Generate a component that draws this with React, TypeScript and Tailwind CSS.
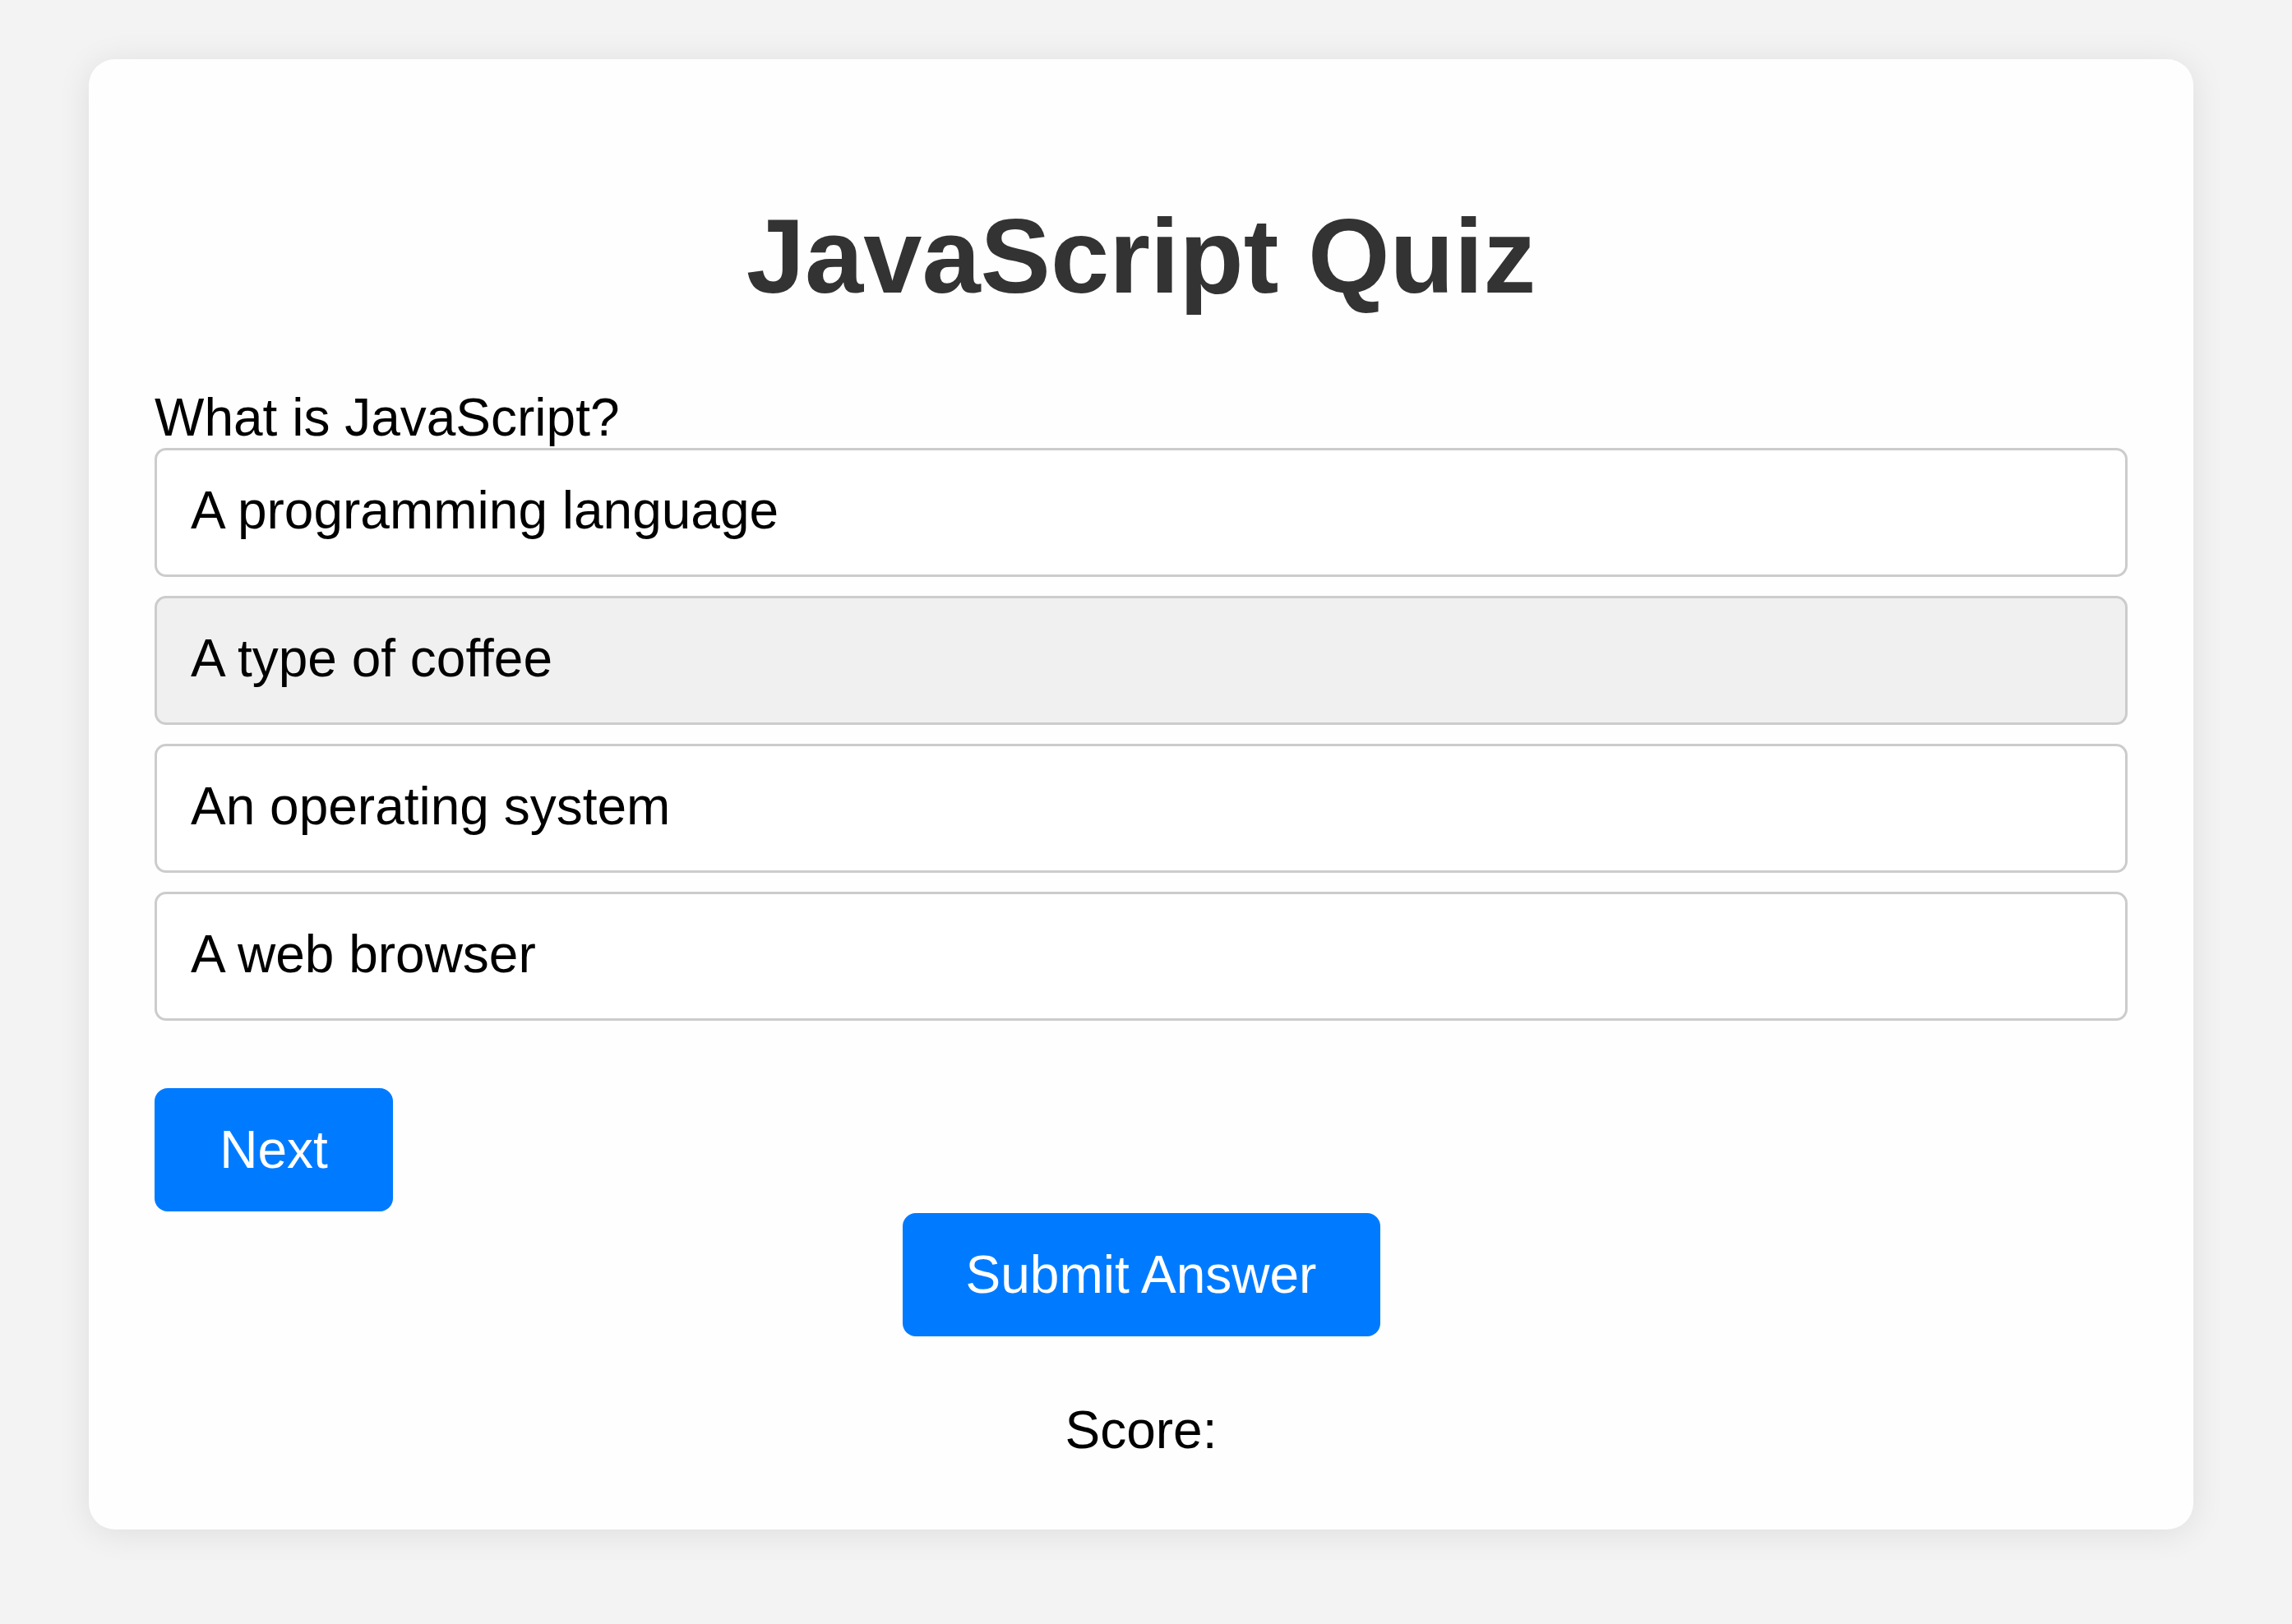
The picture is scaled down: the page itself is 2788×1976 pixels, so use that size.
import React from "react";

const options = [
  "A programming language",
  "A type of coffee",
  "An operating system",
  "A web browser",
];

export default function App() {
  return (
    <div
      className="min-h-[1976px] w-full bg-[#f3f3f3] pt-[72px] text-black"
      style={{ fontFamily: '"Liberation Sans", Arial, sans-serif' }}
    >
      <div className="ml-[108px] w-[2560px] rounded-[32px] bg-[#fefefe] px-[80px] pt-[80px] pb-[84px] shadow-[0_4px_40px_rgba(0,0,0,0.09)]">
        <h1 className="mt-[86px] mb-[86px] text-center text-[128px] font-bold leading-[147px] text-[#333333]">
          JavaScript Quiz
        </h1>
        <p className="text-[64px] leading-[74px]">What is JavaScript?</p>
        <div className="flex flex-col">
          {options.map((o, i) => (
            <div
              key={o}
              className={
                i === 1
                  ? "mb-[23px] rounded-[14px] border-[3px] border-[#cccccc] bg-[#f0f0f0] pl-[41px] pt-[36px] pb-[41px] text-[64px] leading-[74px]"
                  : "mb-[23px] rounded-[14px] border-[3px] border-[#cccccc] bg-white pl-[41px] pt-[36px] pb-[41px] text-[64px] leading-[74px]"
              }
            >
              {o}
            </div>
          ))}
        </div>
        <button className="mt-[59px] flex h-[150px] w-[290px] items-center justify-center rounded-[16px] bg-[#007bff] text-[64px] leading-[74px] text-white">
          Next
        </button>
        <div className="mt-[2px] flex justify-center">
          <button className="flex h-[150px] w-[581px] items-center justify-center rounded-[16px] bg-[#007bff] text-[64px] leading-[74px] text-white">
            Submit Answer
          </button>
        </div>
        <p className="mt-[77px] text-center text-[64px] leading-[74px]">Score: </p>
      </div>
    </div>
  );
}
